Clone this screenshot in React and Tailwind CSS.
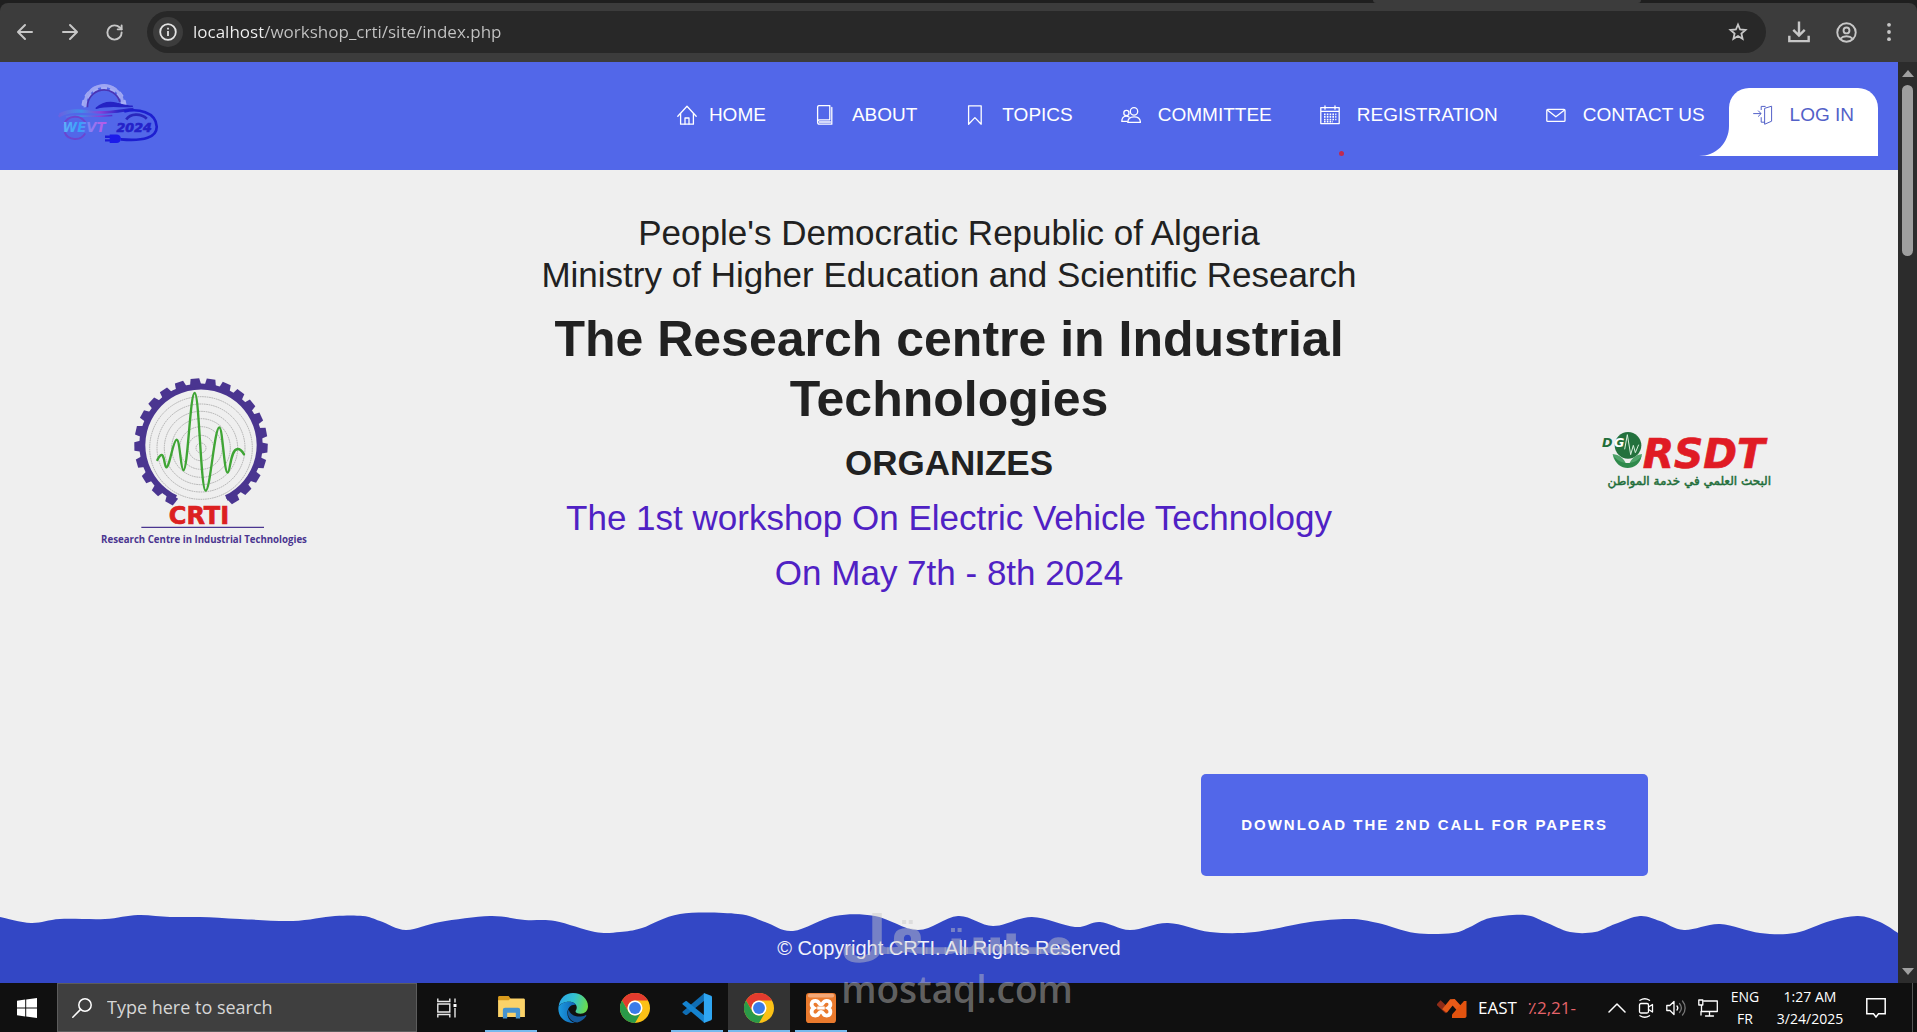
import React from "react";
import { RotateCw } from "lucide-react";

const line = {
  fill: "none",
  stroke: "currentColor",
  strokeWidth: 1.3,
  strokeLinejoin: "round",
  strokeLinecap: "round",
};

/* ---------- navigation icons ---------- */

function NavIcon({ name }) {
  return (
    <svg viewBox="0 0 20 20" className="size-5 shrink-0" {...line} aria-hidden="true">
      {name === "home" && (
        <>
          <path d="M.8 11.2 10 1.2l9.2 10" />
          <path d="M3.6 8.6v10.6h12.8V8.6" />
          <path d="M8 19v-6h4v6" />
        </>
      )}
      {name === "book" && (
        <>
          <path d="M2.6 17V2.2c0-1 .6-1.6 1.6-1.6h10.6v14.2H4.4c-2.4 0-2.4 4.4 0 4.4h12.4V2.4" />
          <path d="M4.4 17h11" />
        </>
      )}
      {name === "bookmark" && <path d="M3.6.8h12.6v18.4L9.9 12.6l-6.3 6.6z" />}
      {name === "users" && (
        <>
          <circle cx="13" cy="6.4" r="3.7" />
          <circle cx="5.4" cy="8" r="2.6" />
          <path d="M6.8 17.4c0-3.6 2.4-5.6 6.3-5.6s6.3 2 6.3 5.6z" />
          <path d="M8 12c-.8-.6-1.6-.9-2.7-.9-2.7 0-4.5 1.9-4.5 5.3h5.4" />
        </>
      )}
      {name === "calendar" && (
        <>
          <path d="M.8 2.6h18.4v16H.8zM.8 6.4h18.4M5 .8v3.4M15 .8v3.4" />
          <path d="M4 9.3h12.4M4 11.9h12.4M4 14.5h12.4M4 16.6h9" strokeDasharray="1.6 1.2" strokeWidth="1.7" strokeLinecap="butt" />
        </>
      )}
      {name === "mail" && (
        <>
          <rect x=".8" y="4.4" width="18.2" height="12" rx="1" />
          <path d="m1.6 5.2 8.3 6.6 8.3-6.6" />
        </>
      )}
      {name === "login" && (
        <>
          <path d="M.6 8.6h7M5.4 5.9l2.7 2.7-2.7 2.7" strokeWidth="1" />
          <path d="M8.2 4.6V1.4h4M8.2 12.6v4.6h3.4M12 3.2l6.6-2v15l-6.6 2.9z" strokeWidth="1" />
        </>
      )}
    </svg>
  );
}

/* ---------- logos ---------- */

function WevtLogo() {
  const teeth = [-168, -143, -117, -90, -63, -37, -12];
  return (
    <svg viewBox="24 24 306 190" className="h-[63px] w-[102px]" role="img" aria-label="WEVT 2024">
      <defs>
        <linearGradient id="wevt-word" x1="0" x2="1">
          <stop offset="0" stopColor="#62b0f8" />
          <stop offset=".4" stopColor="#35a2fa" />
          <stop offset=".65" stopColor="#8f7cf2" />
          <stop offset="1" stopColor="#bb55e6" />
        </linearGradient>
        <linearGradient id="wevt-body" gradientUnits="userSpaceOnUse" x1="28" y1="0" x2="256" y2="0">
          <stop offset="0" stopColor="#6d5fe0" />
          <stop offset=".3" stopColor="#3f8fe8" />
          <stop offset=".55" stopColor="#8a3fd8" />
          <stop offset=".8" stopColor="#2a28c8" />
        </linearGradient>
      </defs>
      <g fill="#a5adf5">
        {teeth.map((a) => (
          <rect key={a} x="-9" y="-68" width="18" height="16" rx="3" transform={`translate(165 97) rotate(${a + 90})`} />
        ))}
      </g>
      <path d="M108 97a57 57 0 0 1 113-16" fill="none" stroke="#9da5f2" strokeWidth="9" />
      <path d="M115 97a50 50 0 0 1 98-16" fill="none" stroke="#4a35b5" strokeWidth="5" />
      <path d="M142 100c20-18 40-20 62-14 18 4 30 8 46 8-30 4-70-6-108 6z" fill="#2523c4" stroke="#2523c4" strokeWidth="5" strokeLinejoin="round" />
      <path d="M28 125c30-18 62-16 104-13 50 4 82-6 122-10" fill="none" stroke="url(#wevt-body)" strokeWidth="7" />
      <path d="M30 118c40-18 70-12 110-6 46 5 80-2 110-8M50 126c40-6 90 2 140-4" fill="none" stroke="url(#wevt-body)" strokeWidth="5" />
      <path d="M44 148a37 37 0 0 1 66-4M46 172c10 26 50 28 62 4" fill="none" stroke="#6b45d0" strokeWidth="6" />
      <path d="M232 134c12-18 44-20 62-2" fill="none" stroke="#2927bd" strokeWidth="8" />
      <path d="M226 110c40-10 96 0 98 46 0 32-38 44-108 38" fill="none" stroke="#1d1fd0" strokeWidth="8" />
      <path d="M168 186h16M168 197h16" stroke="#1c1cd8" strokeWidth="7" />
      <path d="M182 179h20c9 0 14 6 14 13s-5 13-14 13h-20z" fill="#1b1bea" />
      <text x="40" y="171" fontFamily="DejaVu Sans" fontWeight="bold" fontStyle="italic" fontSize="40" fill="url(#wevt-word)">WEVT</text>
      <text x="203" y="171" fontFamily="DejaVu Sans" fontWeight="bold" fontStyle="italic" fontSize="38" stroke="#2422c9" strokeWidth="2" fill="#2422c9">2024</text>
    </svg>
  );
}

function CrtiLogo() {
  const teeth = [
    -241, -226, -211, -196, -181, -167, -152, -138, -124, -109, -95,
    -81, -67, -53, -39, -25, -11, 3, 17, 31, 45, 59,
  ];
  const rings = [15, 38, 64, 88, 110, 132, 154];
  return (
    <svg viewBox="50 48 642 510" className="h-[170px] w-[214px]" role="img" aria-label="Research Centre in Industrial Technologies">
      <path d="M286 411a176 176 0 1 1 152 0" fill="none" stroke="#4a3590" strokeWidth="18" />
      <g fill="#4a3590">
        {teeth.map((a) => (
          <path key={a} d="M-18 -174-14 -200h26l6 26z" transform={`translate(362 252) rotate(${a + 90})`} />
        ))}
      </g>
      <g fill="none" stroke="#8c8c8c" strokeWidth="1.800" strokeDasharray="5 2">
        {rings.map((r) => (
          <circle key={r} cx="362" cy="261" r={r} />
        ))}
      </g>
      <path
        d="M231 297c6-12 12-19 16-13 6 10 6 33 11 35 10 0 20-82 31-83 10 0 12 91 20 92 14 0 20-232 34-232 14 0 18 293 33 293 14 0 26-189 41-190 10 0 14 136 25 136 8 0 8-71 30-71 10 0 14 7 19 16"
        fill="none" stroke="#3fa535" strokeWidth="7" strokeLinecap="round" strokeLinejoin="round"
      />
      <text x="356" y="490" textAnchor="middle" fontFamily="DejaVu Sans" fontWeight="bold" fontSize="72" stroke="#dc2020" strokeWidth="2" fill="#dc2020">CRTI</text>
      <path d="M183 499h368" stroke="#4a3590" strokeWidth="4" />
      <text x="371" y="545" textAnchor="middle" fontFamily="Open Sans, sans-serif" fontWeight="bold" fontSize="29" fill="#4a3590">
        Research Centre in Industrial Technologies
      </text>
    </svg>
  );
}

function RsdtLogo() {
  return (
    <svg viewBox="60 60 552 192" className="h-[64px] w-[184px]" role="img" aria-label="DG RSDT">
      <circle cx="144" cy="106" r="40" fill="#23713d" />
      <path d="M98 132c20 2 34 12 42 34-24-1-40-12-42-34zM186 132c-18 2-32 12-40 34 24-1 38-12 40-34z" fill="#4fa36a" />
      <path d="M102 138c16 28 66 28 82 0-6 48-76 48-82 0z" fill="#2f8a4c" />
      <path d="m134 118 8-44 10 60 8-28 6 22 10-24" fill="none" stroke="#d7efdc" strokeWidth="3" />
      <text x="66" y="112" fontFamily="DejaVu Sans" fontWeight="bold" fontStyle="italic" fontSize="38" fill="#1f6e3a">D</text>
      <text x="102" y="112" fontFamily="DejaVu Sans" fontWeight="bold" fontStyle="italic" fontSize="38" fill="#ffffff">G</text>
      <text x="188" y="173" fontFamily="DejaVu Sans" fontWeight="bold" fontStyle="italic" fontSize="122" stroke="#e01b24" strokeWidth="2" fill="#e01b24">RSDT</text>
      <text x="328" y="226" textAnchor="middle" direction="rtl" fontFamily="DejaVu Sans, sans-serif" fontSize="36" stroke="#1f6e3a" strokeWidth="1.500" fill="#1f6e3a">
        البحث العلمي في خدمة المواطن
      </text>
    </svg>
  );
}

/* ---------- wave above the footer ---------- */

const wavePoints = [
  [0, 4], [31, 10], [60, 6], [105, 6], [138, 2], [170, 4], [200, 4], [240, 6], [293, 8],
  [335, 3], [363, 3], [380, 8], [406, 17], [440, 9], [490, 3], [525, 7], [555, 8], [595, 19],
  [620, 19], [642, 15], [680, 1], [738, 1], [765, 9], [793, 18], [835, 3], [875, 3], [918, 17],
  [958, 3], [993, 13], [1032, 4], [1075, 14], [1100, 9], [1130, 17], [1168, 10], [1210, 19],
  [1255, 19], [1310, 9], [1350, 6], [1378, 10], [1415, 20], [1453, 20], [1470, 14], [1490, 5],
  [1525, 2], [1545, 9], [1570, 19], [1595, 19], [1615, 11], [1640, 3], [1660, 8], [1684, 17],
  [1720, 11], [1760, 20], [1795, 20], [1830, 8], [1858, 3], [1880, 9], [1898, 20],
];

function smoothPath(points) {
  let d = `M${points[0][0]} ${points[0][1]}`;
  for (let i = 0; i < points.length - 1; i++) {
    const a = points[Math.max(i - 1, 0)];
    const b = points[i];
    const c = points[i + 1];
    const e = points[Math.min(i + 2, points.length - 1)];
    d += `C${b[0] + (c[0] - a[0]) / 6} ${b[1] + (c[1] - a[1]) / 6} ${c[0] - (e[0] - b[0]) / 6} ${c[1] - (e[1] - b[1]) / 6} ${c[0]} ${c[1]}`;
  }
  return d + "V24H0z";
}

/* ---------- browser toolbar ---------- */

function BrowserBar() {
  return (
    <div className="bg-[#1f1f1f]">
      <div className="flex h-[3px] justify-end pr-[276px]">
        <div className="w-[268px] rounded-b bg-[#3c3c3c]" />
      </div>
      <div className="flex h-[59px] items-center rounded-t-lg bg-[#3c3c3c] pb-px text-[#c7c7c7]">
        <div className="flex w-[147px] items-center gap-[25px] pl-[15px]">
          <button aria-label="Back">
            <svg viewBox="0 0 20 20" className="size-5" {...line} strokeWidth="2"><path d="M17 10H3.500M10 3l-7 7 7 7" /></svg>
          </button>
          <button aria-label="Forward">
            <svg viewBox="0 0 20 20" className="size-5" {...line} strokeWidth="2"><path d="M3 10h13.500M10 3l7 7-7 7" /></svg>
          </button>
          <button aria-label="Reload"><RotateCw size={19} strokeWidth={2.4} /></button>
        </div>
        <div className="flex h-[42px] min-w-0 flex-1 items-center rounded-full bg-[#282828] pl-[6px] pr-[18px]">
          <button aria-label="View site information" className="flex size-[30px] items-center justify-center rounded-full bg-[#3c3c3c] text-[#e3e3e3]">
            <svg viewBox="0 0 18 18" className="size-[18px]" fill="none" stroke="currentColor" strokeWidth="1.800">
              <circle cx="9" cy="9" r="7.800" /><path d="M9 8v5M9 4.800v1.800" />
            </svg>
          </button>
          <input
            aria-label="Address"
            defaultValue="localhost/workshop_crti/site/index.php"
            className="ml-[10px] min-w-0 flex-1 bg-[linear-gradient(to_right,#f2f2f2_70px,#c4c4c4_70px)] bg-clip-text font-['Open_Sans',sans-serif] text-[17px] text-transparent outline-none"
          />
          <button aria-label="Bookmark this tab">
            <svg viewBox="0 0 20 20" className="size-5" {...line} strokeWidth="1.800" strokeLinejoin="miter"><path d="m10 2.500 2.100 5 5.400.5-4.100 3.500 1.200 5.300L10 14l-4.600 2.800 1.200-5.300L2.500 8l5.400-.5z" /></svg>
          </button>
        </div>
        <div className="flex w-[151px] items-center justify-between pl-[22px] pr-[22px]">
          <button aria-label="Downloads">
            <svg viewBox="0 0 20 20" className="size-[22px]" fill="none" stroke="currentColor" strokeWidth="2.200"><path d="M10 .5v12.500M4.800 8 10 13.200 15.200 8M1.200 13.500v4.800h17.600v-4.800" /></svg>
          </button>
          <button aria-label="Profile">
            <svg viewBox="0 0 20 20" className="size-[21px]" fill="none" stroke="currentColor" strokeWidth="1.800"><circle cx="10" cy="10" r="8.800" /><circle cx="10" cy="8" r="2.800" /><path d="M4 16c3-3.200 9-3.200 12 0" /></svg>
          </button>
          <button aria-label="Menu">
            <svg viewBox="0 0 12 20" className="h-[20px] w-3" fill="currentColor"><circle cx="6" cy="2.800" r="1.900" /><circle cx="6" cy="10" r="1.900" /><circle cx="6" cy="17.200" r="1.900" /></svg>
          </button>
        </div>
      </div>
    </div>
  );
}

/* ---------- site ---------- */

const navItems = [
  ["book", "ABOUT"],
  ["bookmark", "TOPICS"],
  ["users", "COMMITTEE"],
  ["calendar", "REGISTRATION"],
  ["mail", "CONTACT US"],
];

function SiteHeader() {
  return (
    <header className="relative flex h-[108px] items-start justify-between bg-[#5267e9] pl-[57px] pr-5">
      <a href="#home" className="pt-[21px]"><WevtLogo /></a>
      <nav className="mt-[26px] flex h-[68px] text-[19px] leading-7 text-white">
        <a href="#home" className="flex items-start gap-3 px-[25px] pt-[13px]">
          <span className="flex h-7 items-center"><NavIcon name="home" /></span>HOME
        </a>
        {navItems.map(([icon, label]) => (
          <a key={label} href="#site" className="flex items-start gap-[17px] px-[24px] pt-[13px] whitespace-nowrap">
            <span className="flex h-7 items-center"><NavIcon name={icon} /></span>{label}
          </a>
        ))}
        <a href="#login" className="relative flex items-start gap-[17px] rounded-t-[20px] bg-white px-[24px] pt-[13px] whitespace-nowrap text-[#5361c8]">
          <svg viewBox="0 0 30 30" className="absolute right-full bottom-0 size-[30px]" fill="#fff" aria-hidden="true"><path d="M30 0v30H0C17 30 30 17 30 0z" /></svg>
          <span className="flex h-7 items-center"><NavIcon name="login" /></span>LOG IN
        </a>
      </nav>
      <span className="absolute right-[554px] bottom-[14px] size-[5px] rounded-full bg-[#c02a50]" />
    </header>
  );
}

function Hero() {
  return (
    <main className="flex-1">
      <div className="grid grid-cols-[1fr_2fr_1fr] items-center">
        <div className="pl-[97px]"><CrtiLogo /></div>
        <div className="flex flex-col gap-[13px] pt-[42px] pb-[160px] text-center text-[35px] leading-[42px] text-[#212121]">
          <p>
            People's Democratic Republic of Algeria
            <br />
            Ministry of Higher Education and Scientific Research
          </p>
          <h1 className="px-10 text-[50px] leading-[60px] font-bold">The Research centre in Industrial Technologies</h1>
          <p className="font-bold">ORGANIZES</p>
          <p className="text-[#4f21c4]">The 1st workshop On Electric Vehicle Technology</p>
          <p className="text-[#4f21c4]">On May 7th - 8th 2024</p>
        </div>
        <div className="flex justify-end pr-[114px]"><RsdtLogo /></div>
      </div>
      <div className="flex justify-end pt-5 pr-[250px]">
        <button className="h-[102px] rounded-[5px] bg-[#5267e9] px-[40px] text-[15px] font-bold tracking-[2px] text-white">
          DOWNLOAD THE 2ND CALL FOR PAPERS
        </button>
      </div>
    </main>
  );
}

function SiteFooter() {
  return (
    <footer className="text-center text-[20px] leading-6 text-[#f2f2fa]">
      <svg viewBox="0 -1 1898 24" preserveAspectRatio="none" className="block h-6 w-full" fill="#3347c5" aria-hidden="true">
        <path d={smoothPath(wavePoints)} />
      </svg>
      <div className="h-[47px] bg-[#3347c5]">© Copyright CRTI. All Rights Reserved</div>
    </footer>
  );
}

function ScrollBar() {
  return (
    <div className="flex w-[19px] shrink-0 flex-col items-center bg-[#2c2c2c] py-2 text-[#a0a0a0]" aria-hidden="true">
      <svg viewBox="0 0 12 7" className="h-[7px] w-3" fill="currentColor"><path d="M6 0l6 7H0z" /></svg>
      <div className="mt-2 h-[171px] w-[11px] rounded-full bg-[#9f9f9f]" />
      <svg viewBox="0 0 12 7" className="mt-auto h-[7px] w-3" fill="currentColor"><path d="M6 7L0 0h12z" /></svg>
    </div>
  );
}

/* ---------- taskbar ---------- */

function Chrome() {
  return (
    <svg viewBox="0 0 48 48" className="size-[30px]">
      <circle cx="24" cy="24" r="24" fill="#fbc116" />
      <path d="M3.200 12A24 24 0 0 1 44.800 12H24a12 12 0 0 0-10.400 18z" fill="#e33b2e" />
      <path d="M3.200 12A24 24 0 0 0 24 48l10.400-18a12 12 0 0 1-20.800 0z" fill="#2a9a48" />
      <circle cx="24" cy="24" r="12" fill="#fff" />
      <circle cx="24" cy="24" r="9.500" fill="#3a7be8" />
    </svg>
  );
}

function Folder() {
  return (
    <svg viewBox="0 0 28 24" className="h-[23px] w-[27px]">
      <path d="M0 1.500C0 .6.600 0 1.500 0H11l2 2.500V6H0z" fill="#d89a1c" />
      <path d="M0 4.500h11l2-2h13.500c.9 0 1.500.6 1.500 1.500V22H0z" fill="#fbd268" />
      <path d="M5 23.500V14.500c0-1.400.9-2.300 2.300-2.300h13.400c1.400 0 2.300.9 2.300 2.300v9h-4.500v-6h-9v6z" fill="#4593cf" />
    </svg>
  );
}

function Edge() {
  return (
    <svg viewBox="0 0 48 48" className="size-[30px]">
      <defs>
        <linearGradient id="edge-top" x1="0" x2="1" y1=".3" y2=".5">
          <stop offset="0" stopColor="#2aa5e8" /><stop offset=".5" stopColor="#33c2d0" /><stop offset="1" stopColor="#6bdc4b" />
        </linearGradient>
        <linearGradient id="edge-side" x1="0" x2="1">
          <stop offset="0" stopColor="#1c9be0" /><stop offset="1" stopColor="#0f62b4" />
        </linearGradient>
      </defs>
      <path d="M1 21C3 8 12 0 24 0c14 0 24 10 24 21 0 7-5 12-12 12-5 0-8-2-8-4 0-1 2-2 2-6 0-5-5-9-12-9C9 14 3 18 1 21z" fill="url(#edge-top)" />
      <path d="M1 21c3-4 9-7 17-7 5 0 9 2 11 5-7-2-14 4-14 13 0 8 5 14 12 16C12 49-2 38 1 21z" fill="url(#edge-side)" />
      <path d="M17 26c-4 10 3 21 14 21 6-2 11-5 14-10 1-1 0-2-1-1.500C32 41 19 36 17 26z" fill="#155a9c" />
    </svg>
  );
}

function VsCode() {
  return (
    <svg viewBox="0 0 48 48" className="size-[30px]">
      <path d="M1 31.500 5.500 35c.7.500 1.500.500 2.200 0L36 12V0L1.200 29.500c-.7.600-.7 1.500-.2 2z" fill="#0f6db3" />
      <path d="M1 16.500 5.500 13c.7-.500 1.500-.500 2.200 0L36 36v12L1.200 18.500c-.7-.600-.7-1.500-.2-2z" fill="#1583cf" />
      <path d="m35 0 11.500 4.500c1 .4 1.500 1.200 1.500 2.200v34.600c0 1-.5 1.800-1.500 2.200L35 48z" fill="#2fa6f2" />
    </svg>
  );
}

function Xampp() {
  return (
    <svg viewBox="0 0 48 48" className="size-[30px]">
      <rect width="48" height="48" rx="5" fill="#ea7a2d" />
      <rect x="3" y="1" width="42" height="6" rx="3" fill="#f3a878" />
      <path d="M15 12.500c7 0 4 5.500 9 5.500s2-5.500 9-5.500 8 8 2.500 11.500C41 27.500 40 36 33 36s-4-6-9-6-2 6-9 6-8-8.500-2.500-12C7 20.500 8 12.500 15 12.500z" fill="none" stroke="#fff" strokeWidth="6" />
      <path d="M18 24h12" stroke="#fff" strokeWidth="5" />
    </svg>
  );
}

function TaskView() {
  return (
    <svg viewBox="0 0 20 20" className="size-5" fill="none" stroke="#e8e8e8" strokeWidth="1.400">
      <path d="M.8.500v3h12v-3M.8 19.500v-3h12v3M.8 6h12v8H.8zM18 .500v4M18 10v9.500" />
      <path d="M16.500 6h3v3h-3z" fill="#fff" stroke="none" />
    </svg>
  );
}

const apps = [
  { label: "File Explorer", icon: Folder, open: true },
  { label: "Microsoft Edge", icon: Edge },
  { label: "Google Chrome", icon: Chrome },
  { label: "Visual Studio Code", icon: VsCode, open: true },
  { label: "Google Chrome window", icon: Chrome, active: true },
  { label: "XAMPP", icon: Xampp, open: true },
];

function Taskbar() {
  return (
    <div className="flex h-[49px] items-stretch bg-[#101010] font-['Open_Sans',sans-serif] text-white">
      <button aria-label="Start" className="flex w-[57px] items-center pl-[17px]">
        <svg viewBox="0 0 20 20" className="size-5" fill="#fff"><path d="M0 2.800 8.200 1.600v7.800H0zM9.200 1.500 20 0v9.400H9.200zM0 10.400h8.200v8L0 17.200zM9.200 10.400H20V20L9.200 18.500z" /></svg>
      </button>
      <label className="flex w-[360px] items-center border border-[#5c5c5c] bg-[#3f3f3f] pl-[14px]">
        <svg viewBox="0 0 20 20" className="size-5" {...line} strokeWidth="1.500"><circle cx="13" cy="7" r="6.200" /><path d="M8.600 11.400.800 19.200" /></svg>
        <input aria-label="Search" placeholder="Type here to search" className="ml-[15px] min-w-0 flex-1 text-[18px] outline-none placeholder:text-[#d6d6d6]" />
      </label>
      <button aria-label="Task View" className="flex w-[63px] items-center pl-5"><TaskView /></button>
      {apps.map(({ label, icon: Icon, open, active }) => (
        <button key={label} aria-label={label} className={"relative flex w-[62px] items-center justify-center " + (active ? "bg-[#333333]" : "")}>
          <Icon />
          {open && <span className="absolute inset-x-[5px] bottom-0 h-[2px] bg-[#76b9ed]" />}
          {active && <span className="absolute inset-x-0 bottom-0 h-[2px] bg-[#76b9ed]" />}
        </button>
      ))}
      <div className="ml-auto flex items-center">
        <button className="flex items-center gap-[11px] text-[17px]">
          <svg viewBox="0 0 30 22" className="h-[22px] w-[30px]">
            <path d="m1.500 5.500 9 8.500" fill="none" stroke="#8f2c18" strokeWidth="6" />
            <path d="m7.500 14 8-10 10 11" fill="none" stroke="#e85a18" strokeWidth="6" strokeLinejoin="bevel" />
            <path d="M29.500 4v15c0 1.200-.8 2-2 2H15v-3.500L27 4z" fill="#e2530f" />
          </svg>
          <span>EAST</span>
          <span dir="ltr" className="font-['Open_Sans','DejaVu_Sans',sans-serif] text-[#e5636a]">٪2,21-</span>
        </button>
        <div className="ml-[32px] flex items-center gap-[12px]">
          <button aria-label="Show hidden icons"><svg viewBox="0 0 18 10" className="h-[10px] w-[18px]" {...line} strokeWidth="1.500"><path d="m1 9 8-8 8 8" /></svg></button>
          <button aria-label="Meet Now">
            <svg viewBox="0 0 16 20" className="h-5 w-4" {...line}><rect x="1.500" y="5.500" width="9" height="9.500" rx="1.500" /><path d="m10.500 9 4-2.500v7.500l-4-2.500M2 2.300c3-2 6.500-2 9.500 0M2 17.700c3 2 6.500 2 9.500 0" /></svg>
          </button>
          <button aria-label="Volume">
            <svg viewBox="0 0 20 16" className="h-4 w-5" {...line}><path d="M.8 5.500h3L8 1.500v13l-4-4H.800z" /><path d="M11 6c1 1.200 1 2.800 0 4" /><path d="M13.500 3.500c2.300 2.700 2.300 6.300 0 9M16.500 1c3.500 4 3.500 10 0 14" stroke="#777" /></svg>
          </button>
          <button aria-label="Network">
            <svg viewBox="0 0 20 18" className="h-[18px] w-5" {...line}><path d="M6 2h13.300v10.500H3.500V6M.800 1h4v5h-4zM11.500 12.500V17M7.500 17h8M3 12.500V16" /></svg>
          </button>
        </div>
        <button className="ml-[10px] w-[34px] text-center text-[14px] leading-[22px]">ENG<br />FR</button>
        <button className="ml-[8px] w-[80px] text-center text-[14px] leading-[22px] whitespace-nowrap">1:27 AM<br />3/24/2025</button>
        <button aria-label="Notifications" className="ml-4">
          <svg viewBox="0 0 20 20" className="size-5" {...line} strokeWidth="1.500" strokeLinejoin="miter"><path d="M.800.800h18.400v15h-6.700L10 19l-2.500-3.200H.800z" /></svg>
        </button>
        <span className="ml-[26px] h-[49px] w-[5px] border-l border-[#555]" />
      </div>
    </div>
  );
}

/* ---------- watermark ---------- */

function Watermark() {
  return (
    <div className="pointer-events-none absolute bottom-6 left-1/2 flex -ml-[116px] w-[229px] flex-col items-center whitespace-nowrap text-[#c8c8c8]/45">
      <span lang="ar" dir="rtl" className="font-['DejaVu_Sans',sans-serif] text-[54px] leading-[68px] font-bold">مـستـقل</span>
      <span className="font-['Open_Sans',sans-serif] text-[37px] leading-[38px] font-semibold">mostaql.com</span>
    </div>
  );
}

export default function App() {
  return (
    <div className="relative flex min-h-screen flex-col overflow-hidden bg-[#efefef] font-['Liberation_Sans',Arial,sans-serif]">
      <BrowserBar />
      <div className="flex flex-1">
        <div className="flex min-w-0 flex-1 flex-col">
          <SiteHeader />
          <Hero />
          <SiteFooter />
        </div>
        <ScrollBar />
      </div>
      <Taskbar />
      <Watermark />
    </div>
  );
}
